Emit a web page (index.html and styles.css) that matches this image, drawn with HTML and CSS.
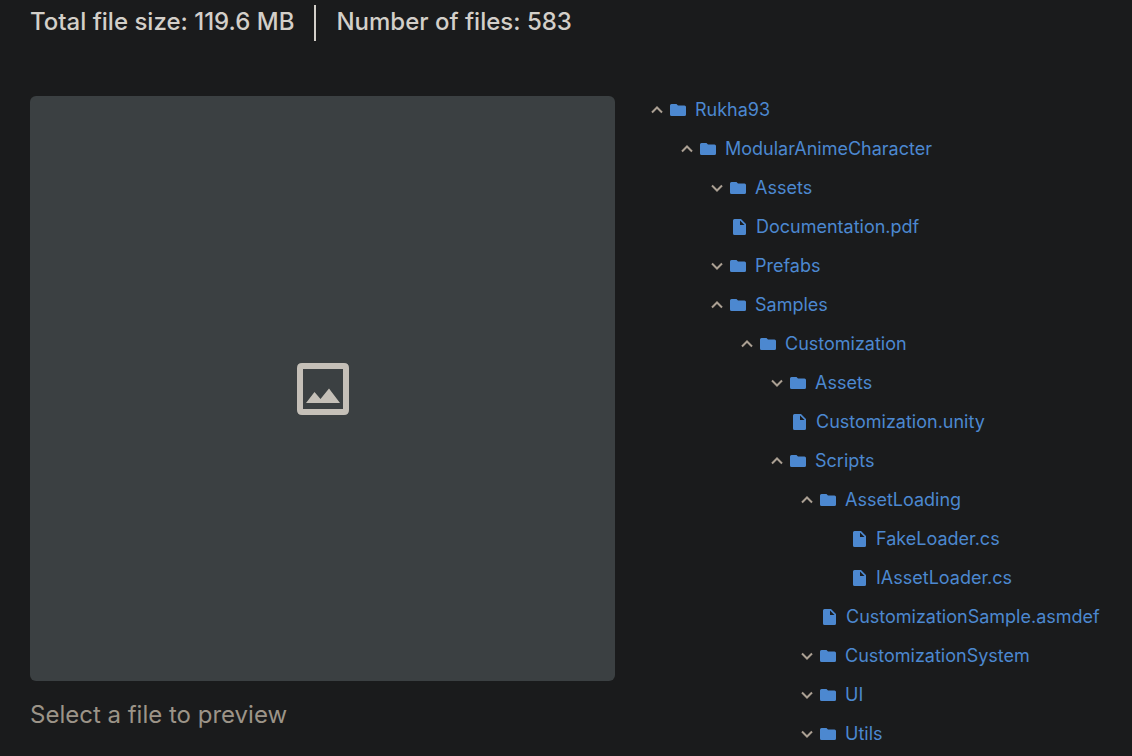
FILE: index.html
```html
<!DOCTYPE html>
<html lang="en">
<head>
<meta charset="utf-8">
<meta name="viewport" content="width=device-width, initial-scale=1">
<title>Package content</title>
<link rel="stylesheet" href="styles.css">
</head>
<body>
<svg class="sprite" aria-hidden="true">
  <symbol id="up" viewBox="0 0 12 8"><path d="M1 6.500l5-5 5 5" fill="none" stroke="currentColor" stroke-width="2"/></symbol>
  <symbol id="down" viewBox="0 0 12 8"><path d="M1 1.500l5 5 5-5" fill="none" stroke="currentColor" stroke-width="2"/></symbol>
  <symbol id="folder" viewBox="0 0 16 12"><path d="M1.500 0H6.500L8 1.500H14.500Q16 1.500 16 3V10.500Q16 12 14.500 12H1.500Q0 12 0 10.500V1.500Q0 0 1.500 0Z" fill="currentColor"/></symbol>
  <symbol id="file" viewBox="0 0 13 16"><path fill-rule="evenodd" d="M1.500 0H8L13 5V14.500Q13 16 11.500 16H1.500Q0 16 0 14.500V1.500Q0 0 1.500 0ZM7 1.500V6H11.500Z" fill="currentColor"/></symbol>
</svg>
<main class="page">
  <header class="summary">
    <span>Total file size: 119.6 MB</span>
    <span class="divider"></span>
    <span>Number of files: 583</span>
  </header>
  <div class="content">
    <section class="preview">
      <div class="preview-box">
        <svg class="image-icon" viewBox="0 0 52 52" aria-hidden="true"><path fill-rule="evenodd" d="M5 0H47Q52 0 52 5V47Q52 52 47 52H5Q0 52 0 47V5Q0 0 5 0ZM6 6V46H46V6Z"/><path d="M9 40L17.500 29L23.500 36L32 25.500L43 40Z"/></svg>
      </div>
      <p class="hint">Select a file to preview</p>
    </section>
    <nav aria-label="Package files">
      <ul class="tree">
        <li><button class="row" aria-expanded="true"><svg class="chevron"><use href="#up"/></svg><svg class="folder"><use href="#folder"/></svg>Rukha93</button>
          <ul>
            <li><button class="row" aria-expanded="true"><svg class="chevron"><use href="#up"/></svg><svg class="folder"><use href="#folder"/></svg>ModularAnimeCharacter</button>
              <ul>
                <li><button class="row" aria-expanded="false"><svg class="chevron"><use href="#down"/></svg><svg class="folder"><use href="#folder"/></svg>Assets</button></li>
                <li><button class="row leaf"><svg class="file"><use href="#file"/></svg>Documentation.pdf</button></li>
                <li><button class="row" aria-expanded="false"><svg class="chevron"><use href="#down"/></svg><svg class="folder"><use href="#folder"/></svg>Prefabs</button></li>
                <li><button class="row" aria-expanded="true"><svg class="chevron"><use href="#up"/></svg><svg class="folder"><use href="#folder"/></svg>Samples</button>
                  <ul>
                    <li><button class="row" aria-expanded="true"><svg class="chevron"><use href="#up"/></svg><svg class="folder"><use href="#folder"/></svg>Customization</button>
                      <ul>
                        <li><button class="row" aria-expanded="false"><svg class="chevron"><use href="#down"/></svg><svg class="folder"><use href="#folder"/></svg>Assets</button></li>
                        <li><button class="row leaf"><svg class="file"><use href="#file"/></svg>Customization.unity</button></li>
                        <li><button class="row" aria-expanded="true"><svg class="chevron"><use href="#up"/></svg><svg class="folder"><use href="#folder"/></svg>Scripts</button>
                          <ul>
                            <li><button class="row" aria-expanded="true"><svg class="chevron"><use href="#up"/></svg><svg class="folder"><use href="#folder"/></svg>AssetLoading</button>
                              <ul>
                                <li><button class="row leaf"><svg class="file"><use href="#file"/></svg>FakeLoader.cs</button></li>
                                <li><button class="row leaf"><svg class="file"><use href="#file"/></svg>IAssetLoader.cs</button></li>
                              </ul>
                            </li>
                            <li><button class="row leaf"><svg class="file"><use href="#file"/></svg>CustomizationSample.asmdef</button></li>
                            <li><button class="row" aria-expanded="false"><svg class="chevron"><use href="#down"/></svg><svg class="folder"><use href="#folder"/></svg>CustomizationSystem</button></li>
                            <li><button class="row" aria-expanded="false"><svg class="chevron"><use href="#down"/></svg><svg class="folder"><use href="#folder"/></svg>UI</button></li>
                            <li><button class="row" aria-expanded="false"><svg class="chevron"><use href="#down"/></svg><svg class="folder"><use href="#folder"/></svg>Utils</button></li>
                          </ul>
                        </li>
                      </ul>
                    </li>
                  </ul>
                </li>
              </ul>
            </li>
          </ul>
        </li>
      </ul>
    </nav>
  </div>
</main>
</body>
</html>
```
FILE: styles.css
```css
* { box-sizing: border-box; }
body {
  margin: 0;
  background: #1a1b1c;
  color: #d3cfc9;
  font-family: Inter, "Noto Sans", sans-serif;
}
.sprite { display: none; }
.page { padding: 5px 30px 0; }
.summary {
  display: flex;
  gap: 20px;
  font-size: 24px;
  font-weight: 500;
  line-height: 34px;
}
.divider {
  width: 2px;
  height: 36px;
  background: #d3cfc9;
}
.content {
  display: grid;
  grid-template-columns: 9fr 7fr;
  gap: 32px;
  margin-top: 49px;
}
.preview { padding-top: 6px; }
.preview-box {
  display: flex;
  align-items: center;
  justify-content: center;
  aspect-ratio: 1;
  border-radius: 6px;
  background: #3b4042;
}
.image-icon {
  width: 52px;
  height: 52px;
  fill: #c5c0b8;
}
.hint {
  margin: 16px 0 0;
  color: #9c9488;
  font-size: 24px;
  line-height: 36px;
}
ul {
  margin: 0;
  padding: 0;
  list-style: none;
}
.tree ul { padding-left: 30px; }
.row {
  display: flex;
  align-items: center;
  height: 39px;
  padding: 0 0 0 4px;
  border: 0;
  background: none;
  color: #4c88d0;
  font: inherit;
  font-size: 18px;
  white-space: nowrap;
  cursor: pointer;
}
.leaf { padding-left: 26px; }
.chevron {
  width: 12px;
  height: 8px;
  margin-right: 7px;
  color: #aba093;
}
.folder {
  width: 16px;
  height: 12px;
  margin-right: 9px;
}
.file {
  width: 13px;
  height: 16px;
  margin-right: 10px;
}
```
